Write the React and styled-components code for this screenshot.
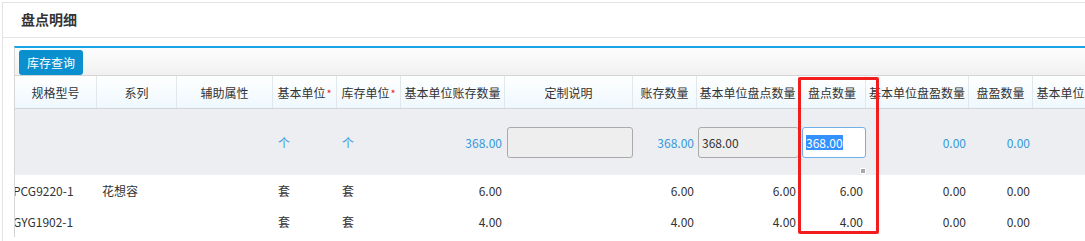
import React from 'react';
import styled, { createGlobalStyle } from 'styled-components';

const GlobalStyle = createGlobalStyle`
  body {
    margin: 0;
    background: #fff;
    font-family: "Noto Sans CJK SC", "Noto Sans", sans-serif;
    font-size: 12px;
    color: #333;
  }
`;

const COLS = '82px 80px 96px 64px 64px 104px 128px 64px 102px 67px 103px 64px 104px';

const Page = styled.div`
  position: relative;
  width: 1085px;
  height: 241px;
  overflow: hidden;
`;

const Card = styled.div`
  margin: 2px 0 0 2px;
  border: 1px solid #e3e3e3;
  border-right: none;
  border-bottom: none;
  background: #fff;
`;

const CardTitle = styled.div`
  height: 34px;
  line-height: 32px;
  padding-left: 18px;
  font-size: 14px;
  font-weight: bold;
  color: #333;
  border-bottom: 1px solid #e6e6e6;
`;

const CardBody = styled.div`
  padding: 8px 0 4px 11px;
`;

const Grid = styled.div`
  border-top: 2px solid #18a6e6;
  border-left: 1px solid #d6d6d6;
  overflow: hidden;
`;

const Toolbar = styled.div`
  height: 28px;
  padding: 2px 4px 0;
  box-sizing: border-box;
  background: linear-gradient(#fdfdfd, #f1f1f1);
  border-bottom: 1px solid #d4d4d4;
`;

const ToolButton = styled.button`
  height: 25px;
  padding: 0 8px;
  border: none;
  border-radius: 3px;
  background: #0a8fcf;
  color: #fff;
  font-family: inherit;
  font-size: 12px;
  cursor: pointer;
`;

const Row = styled.div`
  display: grid;
  grid-template-columns: ${COLS};
  height: ${(p) => p.$h}px;
  background: ${(p) => p.$bg || '#fff'};
`;

const HeadRow = styled(Row)`
  background: linear-gradient(#ffffff, #eef8fd);
  border-bottom: 1px solid #d2d6da;
`;

const HeadCell = styled.div`
  display: flex;
  align-items: center;
  justify-content: center;
  white-space: nowrap;
  overflow: hidden;
  border-right: 1px solid #e1e8ec;
  font-size: 12px;
  color: #333;
`;

const Star = styled.span`
  color: #e8283c;
  font-size: 11px;
  margin-left: 1px;
  align-self: flex-start;
  margin-top: 9px;
`;

const Cell = styled.div`
  position: relative;
  display: flex;
  align-items: center;
  justify-content: ${(p) => (p.$align === 'right' ? 'flex-end' : 'flex-start')};
  padding: ${(p) => (p.$align === 'right' ? '0 3px 0 0' : '0 0 0 5px')};
  white-space: nowrap;
  overflow: hidden;
  color: ${(p) => (p.$blue ? '#3399dd' : '#333')};
`;

const CodeCell = styled(Cell)`
  padding: 0;
  text-indent: -2px;
`;

const FieldCell = styled.div`
  position: relative;
  display: flex;
  align-items: center;
  padding: 0 ${(p) => p.$pr || 0}px 0 ${(p) => p.$pl || 0}px;
`;

const Field = styled.div`
  box-sizing: border-box;
  width: 100%;
  height: 31px;
  display: flex;
  align-items: center;
  padding-left: 3px;
  border: 1px solid ${(p) => (p.$active ? '#6fb0e8' : '#aaa')};
  border-radius: 3px;
  background: ${(p) => (p.$active ? '#fff' : '#eee')};
  color: #333;
  font-size: 12px;
`;

const Selected = styled.span`
  background: #3390ff;
  color: #fff;
  line-height: 15px;
`;

const Handle = styled.span`
  position: absolute;
  right: 0;
  bottom: 1px;
  width: 4px;
  height: 4px;
  background: #a8a8a8;
  border: 1px solid #fff;
`;

const Highlight = styled.div`
  position: absolute;
  left: 798px;
  top: 77px;
  width: 75px;
  height: 151px;
  border: 3px solid #f21d1d;
  border-radius: 2px;
  pointer-events: none;
`;

const headers = [
  { t: '规格型号' },
  { t: '系列' },
  { t: '辅助属性' },
  { t: '基本单位', req: true },
  { t: '库存单位', req: true },
  { t: '基本单位账存数量' },
  { t: '定制说明' },
  { t: '账存数量' },
  { t: '基本单位盘点数量' },
  { t: '盘点数量' },
  { t: '基本单位盘盈数量' },
  { t: '盘盈数量' },
  { t: '基本单位盘亏数量' },
];

const rows = [
  { code: 'PCG9220-1', series: '花想容', qty: '6.00' },
  { code: 'GYG1902-1', series: '', qty: '4.00' },
];

export default function App() {
  return (
    <Page>
      <GlobalStyle />
      <Card>
        <CardTitle>盘点明细</CardTitle>
        <CardBody>
          <Grid>
            <Toolbar>
              <ToolButton>库存查询</ToolButton>
            </Toolbar>
            <HeadRow $h={32}>
              {headers.map((h) => (
                <HeadCell key={h.t}>
                  {h.t}
                  {h.req && <Star>*</Star>}
                </HeadCell>
              ))}
            </HeadRow>
            <Row $h={66} $bg="#eceef1">
              <Cell />
              <Cell />
              <Cell />
              <Cell $blue>个</Cell>
              <Cell $blue>个</Cell>
              <Cell $align="right" $blue>368.00</Cell>
              <FieldCell $pl={2}>
                <Field />
              </FieldCell>
              <Cell $align="right" $blue>368.00</Cell>
              <FieldCell $pl={1}>
                <Field>368.00</Field>
              </FieldCell>
              <FieldCell $pl={3} $pr={0}>
                <Field $active>
                  <Selected>368.00</Selected>
                </Field>
                <Handle />
              </FieldCell>
              <Cell $align="right" $blue>0.00</Cell>
              <Cell $align="right" $blue>0.00</Cell>
              <Cell />
            </Row>
            {rows.map((r) => (
              <Row $h={31} key={r.code}>
                <CodeCell>{r.code}</CodeCell>
                <Cell>{r.series}</Cell>
                <Cell />
                <Cell>套</Cell>
                <Cell>套</Cell>
                <Cell $align="right">{r.qty}</Cell>
                <Cell />
                <Cell $align="right">{r.qty}</Cell>
                <Cell $align="right">{r.qty}</Cell>
                <Cell $align="right">{r.qty}</Cell>
                <Cell $align="right">0.00</Cell>
                <Cell $align="right">0.00</Cell>
                <Cell />
              </Row>
            ))}
          </Grid>
        </CardBody>
      </Card>
      <Highlight />
    </Page>
  );
}
